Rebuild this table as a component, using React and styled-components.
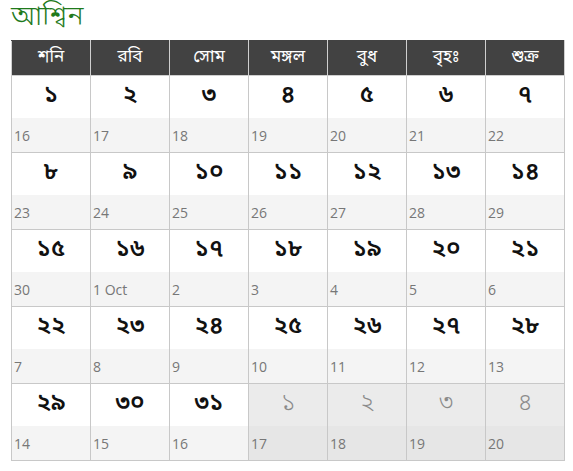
import React from "react";
import styled, { createGlobalStyle } from "styled-components";

const GlobalStyle = createGlobalStyle`
  html, body {
    margin: 0;
    padding: 0;
    background: #fff;
  }
`;

const bn = `"Noto Sans Bengali", "Noto Serif Bengali", "Lohit Bengali", "Noto Sans", sans-serif`;

const HEADS = ["শনি", "রবি", "সোম", "মঙ্গল", "বুধ", "বৃহঃ", "শুক্র"];
const BN_DIGITS = "০১২৩৪৫৬৭৮৯";
const toBn = (n) => String(n).split("").map((d) => BN_DIGITS[+d]).join("");

// Ashwin starts on Saturday 16 Sep
const buildWeeks = () => {
  const cells = [];
  const sep = [16, 17, 18, 19, 20, 21, 22, 23, 24, 25, 26, 27, 28, 29, 30];
  for (let d = 1; d <= 31; d++) {
    let en;
    if (d <= sep.length) en = String(sep[d - 1]);
    else {
      const o = d - sep.length;
      en = o === 1 ? "1 Oct" : String(o);
    }
    cells.push({ bn: toBn(d), en, muted: false });
  }
  for (let d = 1; d <= 4; d++) {
    cells.push({ bn: toBn(d), en: String(16 + d), muted: true });
  }
  const weeks = [];
  for (let i = 0; i < cells.length; i += 7) weeks.push(cells.slice(i, i + 7));
  return weeks;
};

function App() {
  const weeks = buildWeeks();
  return (
    <Page>
      <GlobalStyle />
      <Title>আশ্বিন</Title>
      <Table>
        <thead>
          <tr>
            {HEADS.map((h) => (
              <Head key={h}>{h}</Head>
            ))}
          </tr>
        </thead>
        <tbody>
          {weeks.map((w, i) => (
            <tr key={i}>
              {w.map((c, j) => (
                <Cell key={j} $muted={c.muted}>
                  <Num $muted={c.muted}>{c.bn}</Num>
                  <EnDate $muted={c.muted}>{c.en}</EnDate>
                </Cell>
              ))}
            </tr>
          ))}
        </tbody>
      </Table>
    </Page>
  );
}

export default App;

const Page = styled.div`
  padding: 0 8px 0 11px;
  width: 554px;
`;

const Title = styled.h2`
  margin: 0;
  height: 40px;
  line-height: 36px;
  font-family: ${bn};
  font-weight: 300;
  font-size: 28px;
  color: #1f7a1c;
`;

const Table = styled.table`
  width: 554px;
  border-collapse: collapse;
  table-layout: fixed;
`;

const Head = styled.th`
  height: 33px;
  padding: 0 0 1px;
  background: #424242;
  border: 1px solid #cfcfcf;
  border-top-color: #424242;
  color: #fff;
  font-family: ${bn};
  font-weight: 400;
  font-size: 17px;
  text-align: center;
`;

const Cell = styled.td`
  padding: 0;
  border: 1px solid #c8c8c8;
  vertical-align: top;
  background: ${(p) => (p.$muted ? "#ebebeb" : "#fff")};
`;

const Num = styled.div`
  height: 42px;
  display: flex;
  align-items: center;
  justify-content: center;
  padding-bottom: 2px;
  box-sizing: border-box;
  font-family: ${bn};
  font-size: 24px;
  font-weight: ${(p) => (p.$muted ? 300 : 600)};
  color: ${(p) => (p.$muted ? "#8a8a8a" : "#111")};
`;

const EnDate = styled.div`
  height: 34px;
  display: flex;
  align-items: center;
  padding-left: 2px;
  background: ${(p) => (p.$muted ? "#e6e6e6" : "#f4f4f4")};
  font-family: "Open Sans", sans-serif;
  font-size: 14px;
  color: #777;
`;
